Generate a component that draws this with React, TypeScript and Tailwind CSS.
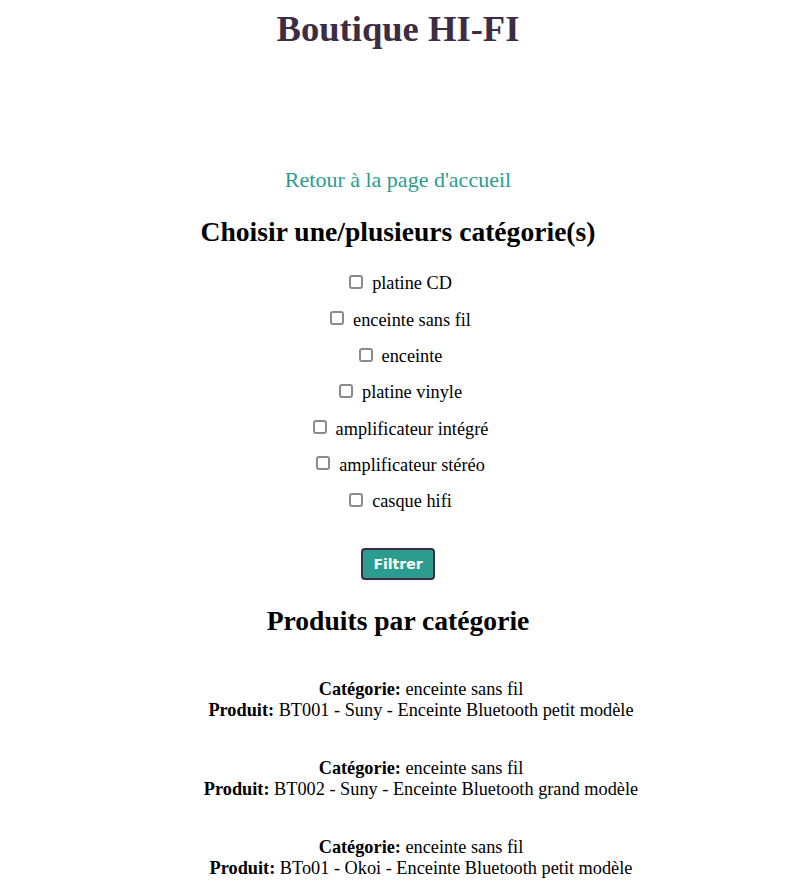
import React from "react";

const categories = [
  "platine CD",
  "enceinte sans fil",
  "enceinte",
  "platine vinyle",
  "amplificateur intégré",
  "amplificateur stéréo",
  "casque hifi",
];

const produits = [
  { cat: "enceinte sans fil", prod: "BT001 - Suny - Enceinte Bluetooth petit modèle" },
  { cat: "enceinte sans fil", prod: "BT002 - Suny - Enceinte Bluetooth grand modèle" },
  { cat: "enceinte sans fil", prod: "BTo01 - Okoi - Enceinte Bluetooth petit modèle" },
];

export default function App() {
  return (
    <div
      className="min-h-[894px] bg-white pl-[9px] text-center text-[18.3px] text-black"
      style={{ fontFamily: '"Liberation Serif", "Times New Roman", serif' }}
    >
      <div className="flex flex-col items-center">
        <h1 className="mt-[11px] text-[36.6px] font-bold leading-none text-[#3d2c44]">
          Boutique HI-FI
        </h1>
        <a className="mt-[121px] text-[22px] leading-none text-[#2a9d8f]" href="#">
          Retour à la page d'accueil
        </a>
        <h2 className="mt-[27px] text-[27.6px] font-bold leading-none">
          Choisir une/plusieurs catégorie(s)
        </h2>
        <div className="mt-[20px] flex flex-col items-center">
          {categories.map((c) => (
            <label key={c} className="flex h-[36.33px] items-center">
              <span className="mb-[3px] ml-[5px] mr-[9px] box-border h-[14px] w-[14px] shrink-0 rounded-[3px] border-2 border-[#8a8a93] bg-white" />
              <span className="leading-none">{c}</span>
            </label>
          ))}
        </div>
        <button
          className="mt-[29px] flex h-[32px] w-[74px] items-center justify-center rounded-[4px] border-2 border-[#3d2c44] bg-[#2a9d8f] text-[14px] font-bold text-white"
          style={{ fontFamily: '"DejaVu Sans", Verdana, sans-serif' }}
        >
          Filtrer
        </button>
        <h2 className="mt-[27px] text-[27.6px] font-bold leading-none">
          Produits par catégorie
        </h2>
        <ul className="mt-[44px] flex w-full flex-col items-center gap-[37px] pl-[46px]">
          {produits.map((p, i) => (
            <li key={i} className="leading-[21px]">
              <div>
                <b>Catégorie:</b> {p.cat}
              </div>
              <div>
                <b>Produit:</b> {p.prod}
              </div>
            </li>
          ))}
        </ul>
      </div>
    </div>
  );
}
